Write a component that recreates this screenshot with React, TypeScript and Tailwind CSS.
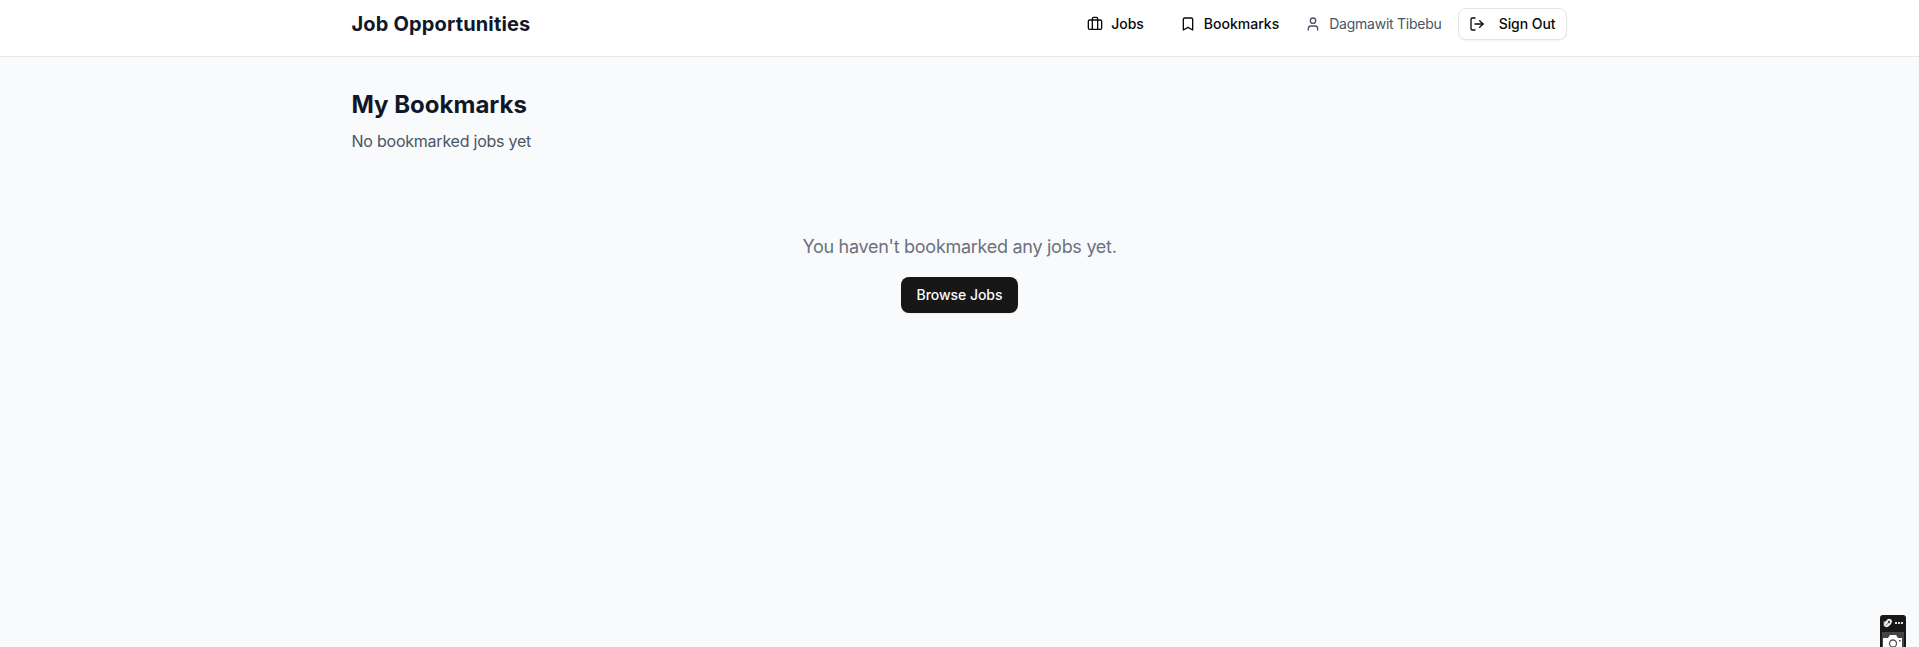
import type { ReactNode } from 'react';
import { Bookmark, LogOut, User } from 'lucide-react';

function NavLink({ icon, children }: { icon: ReactNode; children: ReactNode }) {
  return (
    <a href="#" className="flex h-8 items-center gap-2 px-2.5 text-sm font-medium text-neutral-950">
      {icon}
      {children}
    </a>
  );
}

function Header() {
  return (
    <header className="border-b border-gray-200 bg-white">
      <div className="mx-auto flex h-14 max-w-7xl items-start justify-between pt-2 pr-[33px] pl-8">
        <h1 className="text-xl leading-8 font-bold tracking-[0.16px] text-gray-900">Job Opportunities</h1>
        <nav className="flex items-center gap-4">
          <NavLink icon={<Luggage />}>
            <span>Jobs</span>
          </NavLink>
          <NavLink icon={<Bookmark size={16} />}>
            <span>Bookmarks</span>
          </NavLink>
          <div className="flex items-center gap-2 text-sm text-gray-600">
            <User size={16} />
            <span className="tracking-[-0.24px]">Dagmawit Tibebu</span>
          </div>
          <button className="flex h-8 items-center gap-3.5 rounded-lg border border-neutral-200 bg-white px-2.5 text-sm font-medium text-neutral-950 shadow-xs">
            <LogOut size={16} />
            <span className="tracking-[-0.06px]">Sign Out</span>
          </button>
        </nav>
      </div>
    </header>
  );
}

function Luggage() {
  return (
    <svg width="16" height="16" viewBox="0 0 24 24" fill="none" stroke="currentColor" strokeWidth="2" strokeLinecap="round" strokeLinejoin="round">
      <rect x="2" y="6" width="20" height="14" rx="2" />
      <path d="M16 20V4a2 2 0 0 0-2-2h-4a2 2 0 0 0-2 2v16" />
    </svg>
  );
}

function CaptureWidget() {
  return (
    <aside className="fixed right-[13px] bottom-0 h-8 w-[26px] overflow-hidden rounded-t-[3px] bg-[#181818]">
      <svg width="26" height="32" viewBox="0 0 26 32" fill="none">
        <ellipse cx="8" cy="8" rx="4.6" ry="3" transform="rotate(-48 8 8)" fill="#eee" />
        <path d="M4.2 6.2v4.6h3" stroke="#ddd" strokeWidth="0.9" />
        <circle cx="9" cy="7" r="1.2" fill="#444" />
        <path d="M6 10.2 8 8.2" stroke="#444" strokeWidth="0.8" />
        <path d="M15 7h2v2h-2zM18 7h2v2h-2zM21 7h2v2h-2z" fill="#ddd" />
        <path d="M2 17h22v15H2z" fill="#454545" />
        <path d="M3 23h5l2-3h6l2 3h4v9H3z" fill="#fff" />
        <circle cx="13" cy="28.5" r="3.5" stroke="#555" strokeWidth="1.3" />
        <path d="M19 25h1.5v1.5H19z" fill="#444" />
      </svg>
    </aside>
  );
}

export default function App() {
  return (
    <div className="min-h-screen bg-gray-50 font-['Inter',sans-serif]">
      <Header />
      <main className="mx-auto max-w-7xl px-8 py-8">
        <h2 className="text-2xl font-bold text-gray-900">My Bookmarks</h2>
        <p className="mt-2 text-base tracking-[-0.23px] text-gray-600">No bookmarked jobs yet</p>
        <section className="mt-20 flex flex-col items-center">
          <p className="text-lg tracking-[-0.28px] text-gray-500">You haven't bookmarked any jobs yet.</p>
          <button className="mt-4 h-9 rounded-lg bg-neutral-900 px-4 text-sm font-medium tracking-[-0.04px] text-neutral-50 shadow-xs">
            Browse Jobs
          </button>
        </section>
      </main>
      <CaptureWidget />
    </div>
  );
}
